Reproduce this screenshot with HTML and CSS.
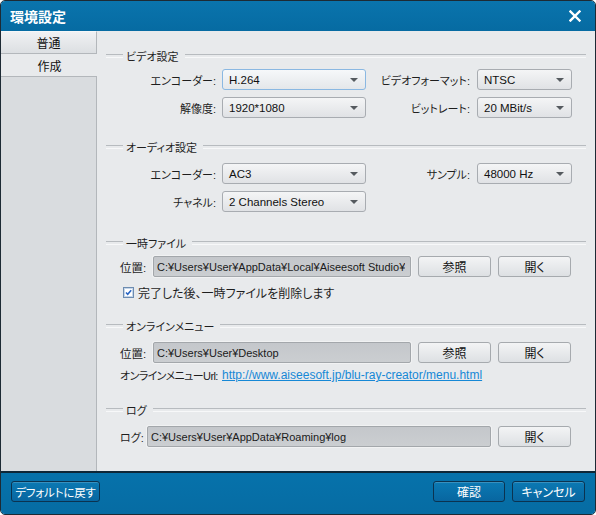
FILE: index.html
```html
<!DOCTYPE html>
<html lang="ja">
<head>
<meta charset="utf-8">
<title>環境設定</title>
<link rel="stylesheet" href="styles.css">
</head>
<body>
<div class="window">
  <header class="titlebar">
    <span class="title">環境設定</span>
    <span class="close" aria-label="閉じる">
      <svg width="12" height="12" viewBox="0 0 12 12"><path d="M1.5 1.5 L10.5 10.5 M10.5 1.5 L1.5 10.5" stroke="#fff" stroke-width="2.4" stroke-linecap="square" fill="none"/></svg>
    </span>
  </header>
  <div class="main">
    <nav class="sidebar">
      <div class="tab">普通</div>
      <div class="tab active">作成</div>
      <div class="sidebar-fill"></div>
    </nav>
    <section class="panel">
      <div class="legend legend-video"><span>ビデオ設定</span></div>
      <div class="row row-first-a">
        <span class="label-l">エンコーダー:</span>
        <div class="select select-wide focus"><span>H.264</span><i class="arrow"></i></div>
        <span class="label-r">ビデオフォーマット:</span>
        <div class="select select-narrow"><span>NTSC</span><i class="arrow"></i></div>
      </div>
      <div class="row row-next">
        <span class="label-l">解像度:</span>
        <div class="select select-wide"><span>1920*1080</span><i class="arrow"></i></div>
        <span class="label-r">ビットレート:</span>
        <div class="select select-narrow"><span>20 MBit/s</span><i class="arrow"></i></div>
      </div>

      <div class="legend legend-audio"><span>オーディオ設定</span></div>
      <div class="row row-first-b">
        <span class="label-l">エンコーダー:</span>
        <div class="select select-wide"><span>AC3</span><i class="arrow"></i></div>
        <span class="label-r">サンプル:</span>
        <div class="select select-narrow"><span>48000 Hz</span><i class="arrow"></i></div>
      </div>
      <div class="row row-next">
        <span class="label-l">チャネル:</span>
        <div class="select select-wide"><span>2 Channels Stereo</span><i class="arrow"></i></div>
      </div>

      <div class="legend legend-temp"><span>一時ファイル</span></div>
      <div class="row row-indent row-first-a">
        <span class="label-pos">位置:</span>
        <div class="field field-short"><span class="field-text">C:¥Users¥User¥AppData¥Local¥Aiseesoft Studio¥</span></div>
        <div class="btn">参照</div>
        <div class="btn">開く</div>
      </div>
      <div class="check-row">
        <svg class="checkbox" width="11" height="11" viewBox="0 0 11 11"><rect x="0.5" y="0.5" width="10" height="10" fill="#f4f7fb" stroke="#6d8cb0"/><rect x="1.5" y="1.5" width="8" height="8" fill="#fff" stroke="#c5d6ea"/><path d="M3 5.5 L4.7 7.3 L8.2 3.2" stroke="#2a66c4" stroke-width="1.6" fill="none"/></svg>
        <span>完了した後、一時ファイルを削除します</span>
      </div>

      <div class="legend legend-online"><span>オンラインメニュー</span></div>
      <div class="row row-indent row-first-b">
        <span class="label-pos">位置:</span>
        <div class="field field-short"><span class="field-text">C:¥Users¥User¥Desktop</span></div>
        <div class="btn">参照</div>
        <div class="btn">開く</div>
      </div>
      <div class="url-row">
        <span class="label-url">オンラインメニューUrl:</span>
        <a class="link" href="#">http://www.aiseesoft.jp/blu-ray-creator/menu.html</a>
      </div>

      <div class="legend legend-log"><span>ログ</span></div>
      <div class="row row-indent row-first-b">
        <span class="label-log">ログ:</span>
        <div class="field field-long"><span class="field-text">C:¥Users¥User¥AppData¥Roaming¥log</span></div>
        <div class="btn">開く</div>
      </div>
    </section>
  </div>
  <footer class="footer">
    <div class="fbtn fbtn-default">デフォルトに戻す</div>
    <div class="footer-right">
      <div class="fbtn">確認</div>
      <div class="fbtn">キャンセル</div>
    </div>
  </footer>
</div>
</body>
</html>
```

FILE: styles.css
```css
* { box-sizing: border-box; }
html, body { margin: 0; padding: 0; background: #ffffff; }
body {
  font-family: "Liberation Sans", "Noto Sans CJK JP", sans-serif;
  font-size: 11px;
  color: #1e1e1e;
  font-feature-settings: "palt";
}
.window {
  width: 596px;
  height: 515px;
  border: 1px solid #1d2a34;
  border-radius: 5px;
  overflow: hidden;
  display: flex;
  flex-direction: column;
  background: #e8eaec;
}
.titlebar {
  height: 30px;
  flex: 0 0 30px;
  background: linear-gradient(#0a74ad, #066ba2);
  display: flex;
  align-items: center;
  justify-content: space-between;
  padding: 0 14px 0 9px;
}
.title {
  color: #fff;
  font-weight: bold;
  font-size: 14px;
}
.close { display: flex; align-items: center; }

.main {
  flex: 0 0 440px;
  height: 440px;
  display: flex;
}
.sidebar {
  width: 96px;
  flex: 0 0 96px;
  display: flex;
  flex-direction: column;
}
.tab {
  height: 23px;
  display: flex;
  align-items: center;
  justify-content: center;
  font-size: 12px;
  color: #111;
  background: linear-gradient(#f0f1f3, #dcdfe2);
  border-right: 1px solid #b3b7bb;
  border-bottom: 1px solid #b3b7bb;
  border-top: 1px solid #f6f7f8;
}
.tab.active {
  height: 22px;
  background: #e8eaec;
  border: none;
  padding-left: 1px;
}
.sidebar-fill {
  flex: 1;
  background: #d9dcdf;
  border-top: 1px solid #b3b7bb;
  border-right: 1px solid #b3b7bb;
}

.panel {
  flex: 1;
  padding: 18px 9px 0 9px;
  display: flex;
  flex-direction: column;
}
.legend {
  height: 14px;
  display: flex;
  align-items: center;
  color: #1e1e1e;
}
.legend::before,
.legend::after {
  content: "";
  height: 2px;
  border-top: 1px solid #b7bbbf;
  border-bottom: 1px solid #f7f8f9;
}
.legend::before { flex: 0 0 17px; }
.legend::after { flex: 1; }
.legend span { padding: 0 6px 0 3px; white-space: nowrap; }
.legend-audio { margin-top: 22px; }
.legend-temp { margin-top: 24px; }
.legend-online { margin-top: 20px; }
.legend-log { margin-top: 20px; }

.row {
  height: 21px;
  display: flex;
  align-items: center;
}
.row-first-a { margin-top: 6px; }
.row-first-b { margin-top: 9px; }
.row-next { margin-top: 7px; }
.row-indent { padding-left: 14px; }

.label-l {
  width: 110px;
  text-align: right;
  margin-right: 6px;
  white-space: nowrap;
}
.label-r {
  width: 104px;
  text-align: right;
  margin-right: 7px;
  white-space: nowrap;
}
.select {
  height: 21px;
  border: 1px solid #a8acb1;
  border-radius: 3px;
  background: linear-gradient(#f4f5f6, #e0e2e5);
  display: flex;
  align-items: center;
  justify-content: space-between;
  padding: 0 7px 0 6px;
  color: #111;
  font-size: 11.5px;
}
.select.focus { border-color: #8ab8e2; background: linear-gradient(#f6f8fa, #e4e7ea); }
.select-wide { width: 144px; }
.select-narrow { width: 95px; }
.arrow {
  width: 0;
  height: 0;
  border-left: 4px solid transparent;
  border-right: 4px solid transparent;
  border-top: 4px solid #555a5f;
}

.label-pos { width: 33px; flex: 0 0 33px; white-space: nowrap; font-size: 11.5px; }
.label-log { width: 27px; flex: 0 0 27px; white-space: nowrap; }
.field {
  height: 21px;
  flex: 0 0 auto;
  border: 1px solid #a3a7ab;
  border-radius: 2px;
  background: linear-gradient(#c4c7cb, #cbced1);
  box-shadow: 0 0 0 1px #f1f2f3;
  padding: 0 3px;
  display: flex;
  align-items: center;
  overflow: hidden;
  color: #1a1a1a;
}
.field-text {
  display: block;
  min-width: 0;
  overflow: hidden;
  white-space: nowrap;
  font-size: 11px;
}
.field-short { width: 258px; margin-right: 7px; }
.field-long { width: 344px; margin-right: 7px; }
.btn {
  width: 73px;
  flex: 0 0 73px;
  height: 21px;
  border: 1px solid #a6aaae;
  border-radius: 3px;
  background: linear-gradient(#f3f4f5, #dde0e3);
  display: flex;
  align-items: center;
  justify-content: center;
  margin-right: 7px;
  font-size: 12px;
  color: #111;
}

.check-row {
  margin-top: 8px;
  height: 14px;
  display: flex;
  align-items: center;
  padding-left: 17px;
  font-size: 12px;
}
.checkbox { margin-right: 4px; flex: 0 0 11px; }

.url-row {
  margin-top: 4px;
  height: 16px;
  display: flex;
  align-items: center;
  padding-left: 14px;
}
.label-url {
  flex: 0 0 102px;
  white-space: nowrap;
  letter-spacing: -0.6px;
}
.link {
  color: #1688d6;
  text-decoration: underline;
  font-size: 12px;
  white-space: nowrap;
}

.footer {
  flex: 0 0 43px;
  height: 43px;
  border-top: 2px solid #0e2738;
  background: linear-gradient(#0672ab, #066ca3);
  display: flex;
  justify-content: space-between;
  align-items: flex-start;
  padding: 8px 10px 0 10px;
}
.footer-right { display: flex; gap: 7px; }
.fbtn {
  height: 21px;
  width: 73px;
  border: 1px solid #0b3350;
  border-radius: 3px;
  background: linear-gradient(#0b79b3, #0866a0);
  box-shadow: inset 0 1px 0 rgba(255,255,255,0.18);
  color: #fff;
  display: flex;
  align-items: center;
  justify-content: center;
  font-size: 12px;
}
.footer-right .fbtn:first-child { width: 72px; }
.fbtn-default { width: 89px; font-size: 11.5px; letter-spacing: -0.2px; }
```
